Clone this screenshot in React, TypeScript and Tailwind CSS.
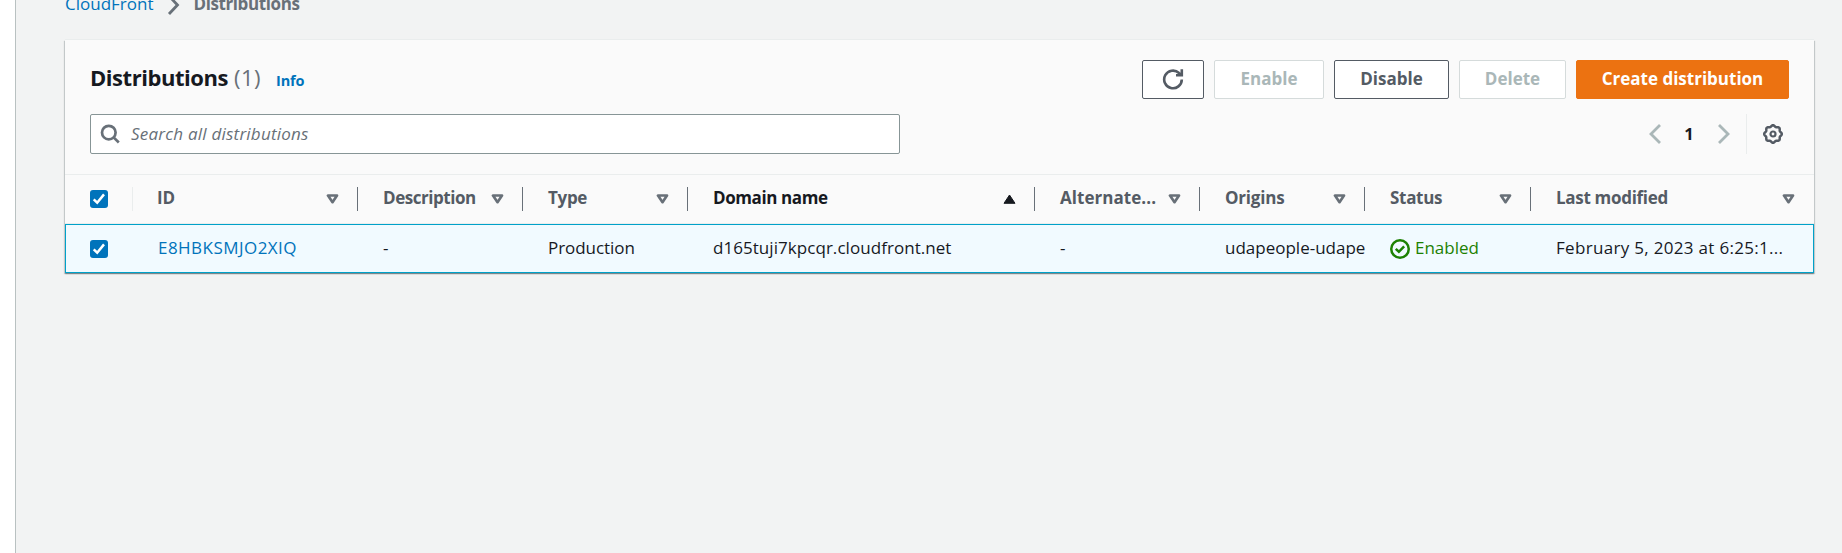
import React from 'react';

type Column = {
  name: string;
  width: string;
  tracking: string;
  sorted?: boolean;
  value: React.ReactNode;
};

function StatusOk() {
  return (
    <svg className="size-5 shrink-0" viewBox="0 0 16 16" fill="none" stroke="#1d8102" strokeWidth="2">
      <circle cx="8" cy="8" r="7" />
      <path d="M4.6 7.9 7.1 10.2 11.3 5.9" strokeWidth="2" />
    </svg>
  );
}

const columns: Column[] = [
  {
    name: 'ID',
    width: 'w-[225px]',
    tracking: '-ml-px tracking-[-0.2px]',
    value: <a className="tracking-[0.46px] text-[#0073bb]">E8HBKSMJO2XIQ</a>,
  },
  { name: 'Description', width: 'w-[165px]', tracking: 'tracking-[-0.45px]', value: '-' },
  {
    name: 'Type',
    width: 'w-[165px]',
    tracking: 'tracking-[-0.3px]',
    value: <span className="tracking-[-0.05px]">Production</span>,
  },
  {
    name: 'Domain name',
    width: 'w-[347px]',
    tracking: 'tracking-[-0.4px]',
    sorted: true,
    value: <span className="tracking-[0.05px]">d165tuji7kpcqr.cloudfront.net</span>,
  },
  { name: 'Alternate...', width: 'w-[165px]', tracking: 'tracking-[0.05px]', value: '-' },
  {
    name: 'Origins',
    width: 'w-[165px]',
    tracking: 'tracking-[-0.2px]',
    value: <span>udapeople-udape</span>,
  },
  {
    name: 'Status',
    width: 'w-[166px]',
    tracking: 'tracking-[-0.3px]',
    value: (
      <span className="flex items-center gap-[5px] text-[#1d8102]">
        <span className="flex pt-[2px]">
          <StatusOk />
        </span>
        Enabled
      </span>
    ),
  },
  {
    name: 'Last modified',
    width: 'w-[283px]',
    tracking: 'tracking-[-0.3px]',
    value: <span className="tracking-[0.31px]">February 5, 2023 at 6:25:1...</span>,
  },
];

function SortIcon({ active }: { active?: boolean }) {
  return active ? (
    <svg className="mr-px h-2.5 w-[13px]" viewBox="0 0 13 10">
      <path d="M6.5 1 12 9.3H1Z" fill="#16191f" stroke="#16191f" strokeWidth="1" strokeLinejoin="round" />
    </svg>
  ) : (
    <svg className="mr-px h-2.5 w-[13px]" viewBox="0 0 13 10">
      <path d="M2 1.5H11L6.5 8.2Z" fill="none" stroke="#687078" strokeWidth="2.7" strokeLinejoin="round" />
    </svg>
  );
}

function Checkbox() {
  return (
    <span className="flex size-[18px] items-center justify-center rounded-[3px] bg-[#0073bb]">
      <svg className="size-[18px]" viewBox="0 0 18 18" fill="none" stroke="white" strokeWidth="2.5">
        <path d="M3.7 9.4 7.2 12.7 14 4.4" />
      </svg>
    </span>
  );
}

// Eight-lobed outline of the settings gear, sampled around the centre (10, 10).
const gearPoints = Array.from({ length: 96 }, (_, i) => {
  const angle = (i / 96) * Math.PI * 2;
  const radius = 8.1 + 0.7 * Math.cos(8 * angle);
  return `${(10 + radius * Math.cos(angle)).toFixed(2)},${(10 + radius * Math.sin(angle)).toFixed(2)}`;
}).join(' ');

function Button({ className, children }: { className: string; children: React.ReactNode }) {
  return (
    <button className={`flex h-[39px] items-center justify-center rounded-[2px] border pb-px font-bold ${className}`}>
      {children}
    </button>
  );
}

export default function App() {
  return (
    <div className="flex h-[553px] w-full overflow-hidden bg-[#f2f3f3] font-['Open_Sans','Noto_Sans',sans-serif] text-[17px] leading-6 whitespace-nowrap text-[#16191f]">
      <aside className="w-4 shrink-0 border-r border-[#b9c1c1] bg-white" />
      <main className="w-[1798px] shrink-0 pl-[49px]">
        <nav className="-mt-2 flex h-12 items-start">
          <a className="text-[#0073bb]">CloudFront</a>
          <svg className="mt-[3px] ml-[13px] h-5 w-[14px]" viewBox="0 0 14 20" fill="none" stroke="#687078" strokeWidth="2.8">
            <path d="M2 1 10.5 10 2 19" />
          </svg>
          <span className="ml-[13px] font-bold tracking-[-0.4px] text-[#687078]">Distributions</span>
        </nav>

        <section className="h-[233px] w-[1749px] bg-[#fafafa] shadow-[0_1px_1px_0_rgba(0,28,36,0.3),1px_1px_1px_0_rgba(0,28,36,0.15),-1px_1px_1px_0_rgba(0,28,36,0.15),0_-1px_0_0_#eaeded]">
          <div className="h-[134px] px-[25px] pt-5">
            <div className="flex h-[39px] items-center justify-between">
              <div className="flex items-baseline pb-px">
                <h1 className="text-[22px] font-bold tracking-[-0.45px]">Distributions</h1>
                <span className="ml-[6px] text-[22px] tracking-[0.5px] text-[#687078]">(1)</span>
                <a className="ml-[15px] text-[14.5px] font-bold tracking-[-0.2px] text-[#0073bb]">Info</a>
              </div>
              <div className="flex gap-[10px]">
                <Button className="w-[62px] border-[#545b64] bg-white">
                  <svg className="size-[22px]" viewBox="0 0 22 22" fill="none" stroke="#545b64" strokeWidth="2.6">
                    <path d="M19.8 11.4A8.8 8.8 0 1 1 17 5L19.4 7" />
                    <path d="M19.8 1.2V7.2H14" />
                  </svg>
                </Button>
                <Button className="w-[110px] border-[#d5dbdb] bg-white text-[#aab7b8]">Enable</Button>
                <Button className="w-[115px] border-[#545b64] bg-white text-[#545b64]">Disable</Button>
                <Button className="w-[107px] border-[#d5dbdb] bg-white text-[#aab7b8]">Delete</Button>
                <Button className="w-[213px] border-[#ec7211] bg-[#ec7211] text-white">Create distribution</Button>
              </div>
            </div>
            <div className="mt-[15px] flex h-10 items-center justify-between">
              <div className="flex h-10 w-[810px] items-center rounded-[2px] border border-[#879596] bg-white pl-[9px]">
                <svg className="size-5" viewBox="0 0 20 20" fill="none" stroke="#687078" strokeWidth="2.7">
                  <circle cx="8.8" cy="8.6" r="6.8" />
                  <path d="M13.6 13.4 18.8 18.5" />
                </svg>
                <span className="ml-[11px] pb-px tracking-[0.23px] text-[#687078] italic">Search all distributions</span>
              </div>
              <div className="flex h-10 items-center pr-[6px]">
                <svg className="h-5 w-3" viewBox="0 0 12 20" fill="none" stroke="#aab7b8" strokeWidth="2.8">
                  <path d="M11 1 2 10 11 19" />
                </svg>
                <span className="w-[57px] pr-px pb-px text-center text-[16.5px] font-bold">1</span>
                <svg className="h-5 w-3" viewBox="0 0 12 20" fill="none" stroke="#aab7b8" strokeWidth="2.8">
                  <path d="M1 1 10 10 1 19" />
                </svg>
                <span className="ml-4 h-10 w-px bg-[#eaeded]" />
                <svg className="ml-4 size-5" viewBox="0 0 20 20" fill="none" stroke="#545b64">
                  <polygon points={gearPoints} strokeWidth="2.5" strokeLinejoin="round" />
                  <circle cx="10" cy="10" r="2.5" strokeWidth="2.2" />
                </svg>
              </div>
            </div>
          </div>

          <div className="flex h-[50px] items-center border-y border-[#eaeded] font-bold text-[#545b64]">
            <div className="flex h-6 w-[68px] items-center border-r border-[#eaeded] pl-[25px]">
              <Checkbox />
            </div>
            {columns.map((c, i) => (
              <div
                key={c.name}
                className={`flex h-6 shrink-0 items-center justify-between pl-[25px] ${c.width} ${
                  i < columns.length - 1 ? 'border-r border-[#687078] pr-[17px]' : 'pr-[18px]'
                }`}
              >
                <span className={`pb-[2px] ${c.tracking} ${c.sorted ? 'text-[#16191f]' : ''}`}>{c.name}</span>
                <SortIcon active={c.sorted} />
              </div>
            ))}
          </div>

          <div className="flex h-[49px] items-center border border-[#00a1c9] bg-[#f1faff]">
            <div className="flex w-[67px] items-center pl-6">
              <Checkbox />
            </div>
            {columns.map((c) => (
              <div key={c.name} className={`flex shrink-0 items-center pb-px pl-[25px] last:w-[281px] ${c.width}`}>
                {c.value}
              </div>
            ))}
          </div>
        </section>
      </main>
    </div>
  );
}
